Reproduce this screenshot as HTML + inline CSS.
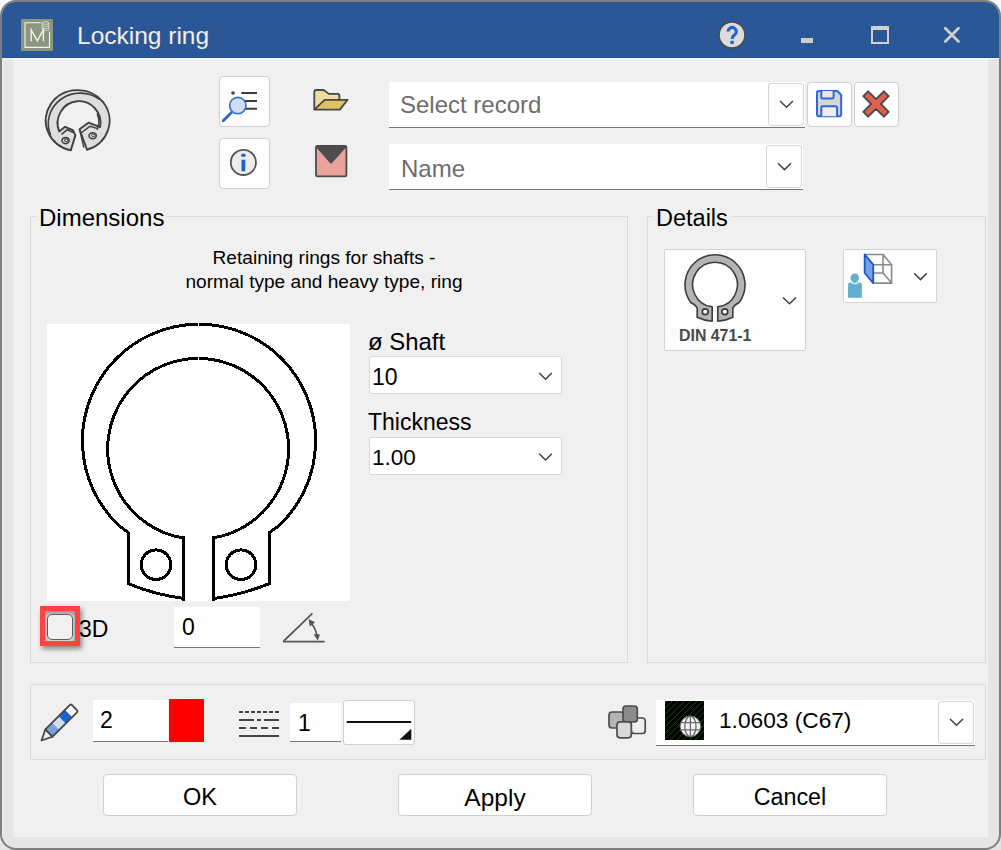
<!DOCTYPE html>
<html><head><meta charset="utf-8">
<style>
*{box-sizing:border-box;margin:0;padding:0}
html,body{width:1001px;height:850px;overflow:hidden;background:linear-gradient(#f8f8f8,#e4e4e4);font-family:"Liberation Sans",sans-serif}
.a{position:absolute}
.t{position:absolute;white-space:nowrap;line-height:1;color:#000}
#win{position:absolute;left:0;top:0;width:1001px;height:850px;border:2px solid #7f7f7f;border-radius:16px;background:#e5e5e5;overflow:hidden}
#title{position:absolute;left:0;top:0;width:997px;height:56px;background:#2b5797;border-bottom:1px solid #224f94}
#content{position:absolute;left:11px;top:56px;width:975px;height:779px;background:#f0f0f0;border-top:1px solid #fbfbfb}
.btn{position:absolute;background:#fdfdfd;border:1px solid #d0d0d0;border-radius:4px}
.inp{position:absolute;background:#fff;border-bottom:1.3px solid #757575}
.dd{position:absolute;background:#fdfdfd;border:1px solid #d6d6d6;border-radius:3px}
.grp{position:absolute;border:1px solid #dadada}
.chev{position:absolute}
</style></head>
<body>
<div id="win">
 <div id="title"></div>
 <div id="content"></div>
 <div class="a" style="left:0;top:56px;width:997px;height:1px;background:#f8f8f8"></div>
 <div class="a" style="left:0;top:56px;width:1px;height:780px;background:#efefef"></div>
</div>

<!-- title bar contents (absolute page coords) -->
<svg class="a" style="left:21px;top:19px" width="32" height="32" viewBox="0 0 32 32">
 <rect x="0" y="0" width="32" height="32" fill="#8a977f"/>
 <path d="M20 3.8H4V28.4H28.5V12.6" fill="none" stroke="#f4f4ee" stroke-width="1.1"/>
 <path d="M10.2 22.2V10.8L16.3 21.8L22.4 10.8V22.2" fill="none" stroke="#f4f4ee" stroke-width="1.4"/>
 <g fill="none" stroke="#e6e8de" stroke-width="0.8">
  <ellipse cx="24.5" cy="4" rx="3.3" ry="1.3"/>
  <path d="M21.2 4V10.4C21.2 11.6 27.8 11.6 27.8 10.4V4M21.2 6.3C21.2 7.5 27.8 7.5 27.8 6.3M21.2 8.5C21.2 9.7 27.8 9.7 27.8 8.5"/>
 </g>
</svg>
<div class="t" style="left:77px;top:24px;font-size:24.5px;color:#f2efe6">Locking ring</div>

<!-- title buttons -->
<svg class="a" style="left:717px;top:20px" width="30" height="30" viewBox="0 0 30 30">
 <circle cx="15" cy="15" r="13" fill="#dcdcdc" stroke="#4a4a4a" stroke-width="1.6"/>
 <path d="M11.1 11.6A4.1 4.1 0 1 1 17.3 15.1Q15.2 16.4 15.2 19" fill="none" stroke="#1f63d3" stroke-width="3.1"/><circle cx="15.1" cy="22.3" r="1.9" fill="#1f63d3"/>
</svg>
<div class="a" style="left:801px;top:38px;width:12px;height:4.5px;background:#cfcdcb"></div>
<div class="a" style="left:871px;top:26px;width:18px;height:18px;border:2px solid #d2d0ce;border-top-width:4px"></div>
<svg class="a" style="left:942px;top:25px" width="20" height="20" viewBox="0 0 20 20">
 <path d="M3.3 3.3L16.5 16.5M16.5 3.3L3.3 16.5" stroke="#d2d0ce" stroke-width="2.7" stroke-linecap="round"/>
</svg>

<!-- group boxes -->
<div class="grp" style="left:30px;top:216px;width:598px;height:447px"></div>
<div class="a" style="left:37px;top:210px;width:130px;height:12px;background:#f0f0f0"></div>
<div class="t" style="left:39px;top:205.8px;font-size:24px">Dimensions</div>
<div class="grp" style="left:647px;top:216px;width:339px;height:447px"></div>
<div class="a" style="left:653px;top:210px;width:78px;height:12px;background:#f0f0f0"></div>
<div class="t" style="left:656px;top:207px;font-size:23.5px">Details</div>
<div class="grp" style="left:30px;top:684px;width:956px;height:76px"></div>

<!-- top row -->
<div class="btn" style="left:219px;top:76px;width:51px;height:51px"></div>
<div class="btn" style="left:219px;top:138px;width:51px;height:51px"></div>

<div class="inp" style="left:389px;top:82px;width:416px;height:46px"></div>
<div class="t" style="left:400px;top:93px;font-size:24px;color:#6d6d6d">Select record</div>
<div class="dd" style="left:768px;top:83px;width:36px;height:43px"></div>
<div class="btn" style="left:807px;top:82px;width:45px;height:45px"></div>
<div class="btn" style="left:854px;top:82px;width:45px;height:45px"></div>

<div class="inp" style="left:389px;top:144px;width:414px;height:46px"></div>
<div class="t" style="left:401px;top:157px;font-size:24px;color:#6d6d6d">Name</div>
<div class="dd" style="left:766px;top:145px;width:36px;height:43px"></div>

<!-- dimensions contents -->
<div class="t" style="left:0;width:648px;text-align:center;top:247.5px;font-size:19.1px">Retaining rings for shafts -</div>
<div class="t" style="left:0;width:648px;text-align:center;top:272px;font-size:19.1px">normal type and heavy type, ring</div>
<div class="a" style="left:47px;top:324px;width:303px;height:277px;background:#fff"></div>

<div class="t" style="left:368px;top:330px;font-size:23.9px">ø Shaft</div>
<div class="dd" style="left:369px;top:356px;width:193px;height:38px;background:#fff;border-color:#d8d8d8;border-radius:2px"></div>
<div class="t" style="left:372px;top:366px;font-size:23px">10</div>
<div class="t" style="left:368px;top:411px;font-size:23px">Thickness</div>
<div class="dd" style="left:369px;top:437px;width:193px;height:38px;background:#fff;border-color:#d8d8d8;border-radius:2px"></div>
<div class="t" style="left:372px;top:446.5px;font-size:22.5px">1.00</div>

<div class="inp" style="left:174px;top:607px;width:86px;height:41px"></div>
<div class="t" style="left:182px;top:615.5px;font-size:23px">0</div>
<div class="t" style="left:79px;top:618px;font-size:23px">3D</div>


<div class="a" style="left:40px;top:606px;width:40px;height:40px;border:5px solid #ff4242;box-shadow:2px 3px 5px rgba(0,0,0,0.45);background:#f0f0f0"></div>
<div class="a" style="left:45px;top:611px;width:30px;height:30px;box-shadow:inset 0 2px 5px 1px #8c8c8c"></div>
<div class="a" style="left:47px;top:614px;width:26px;height:26px;border:1.8px solid #5c5c5c;border-radius:5px;background:#f0f0f0"></div>
<!-- details -->
<div class="btn" style="left:664px;top:249px;width:142px;height:102px;border-radius:2px;border-color:#d4d4d4"></div>
<div class="t" style="left:679px;top:328.3px;font-size:15.9px;font-weight:bold;color:#4a4a4a">DIN 471-1</div>
<div class="btn" style="left:843px;top:249px;width:94px;height:54px;border-radius:2px;border-color:#d4d4d4"></div>

<!-- bottom toolbar -->
<div class="inp" style="left:93px;top:700px;width:75px;height:42px"></div>
<div class="t" style="left:100px;top:708.5px;font-size:23px">2</div>
<div class="a" style="left:169px;top:699px;width:35px;height:43px;background:#ff0000"></div>
<div class="inp" style="left:290px;top:703px;width:51px;height:39px"></div>
<div class="t" style="left:298px;top:712px;font-size:23px">1</div>
<div class="btn" style="left:343px;top:700px;width:72px;height:45px;border-radius:3px;border-color:#d0d0d0"></div>
<div class="inp" style="left:656px;top:700px;width:319px;height:45.5px"></div>
<div class="dd" style="left:938px;top:701px;width:36px;height:43px"></div>
<div class="t" style="left:719px;top:708.5px;font-size:22.7px">1.0603 (C67)</div>

<!-- buttons -->
<div class="btn" style="left:103px;top:774px;width:194px;height:41.5px;border-color:#d0d0d0"></div>
<div class="t" style="left:103px;width:194px;text-align:center;top:785.5px;font-size:23.5px">OK</div>
<div class="btn" style="left:398px;top:774px;width:194px;height:41.5px;border-color:#d0d0d0"></div>
<div class="t" style="left:398px;width:194px;text-align:center;top:785.5px;font-size:24.5px">Apply</div>
<div class="btn" style="left:693px;top:774px;width:194px;height:41.5px;border-color:#d0d0d0"></div>
<div class="t" style="left:693px;width:194px;text-align:center;top:786px;font-size:23.3px">Cancel</div>

<svg class="a" style="left:0;top:0" width="1001" height="850" viewBox="0 0 1001 850">
 <!-- top-left ring icon -->
 <g stroke="#404040" stroke-width="1.9" stroke-linejoin="round" fill="none">
  <path d="M70.73 150.38A31.95 30.5 0 1 1 86.99 149.77L79.5 129.2L88.5 122.7L100.17 127.02A21.45 22 0 1 0 59.16 131.44L65.1 126.8L72.9 130.1L75.4 135.4Z" fill="#dedede" fill-rule="evenodd"/>
  <path d="M50.58 135.03A31.95 30.5 0 0 1 99.87 99.57" stroke-width="1.6"/>
  <path d="M97.19 129.84A21.45 22 0 0 0 97.19 113.36" stroke-width="1.5"/>
  <path d="M61.5 134.3L67.3 129.7L73.5 132.5" stroke-width="1.5"/>
  <path d="M81.6 132.5L90.2 126.2L97.5 128.6" stroke-width="1.5"/>
  <path d="M79.5 129.2L83.8 147.6" stroke-width="1.4"/>
  <ellipse cx="65.6" cy="140.6" rx="3.6" ry="3" stroke-width="1.6"/>
  <ellipse cx="66.2" cy="140.2" rx="1.8" ry="1.3" stroke-width="1"/>
  <ellipse cx="92.7" cy="135.7" rx="3.6" ry="3" stroke-width="1.6"/>
  <ellipse cx="93.3" cy="135.3" rx="1.8" ry="1.3" stroke-width="1"/>
 </g>

 <!-- search list icon -->
 <circle cx="233" cy="93" r="1.8" fill="#444"/>
 <path d="M241.3 93H257M241.3 101H257M241.3 108.8H257" stroke="#3c3c3c" stroke-width="2"/>
 <path d="M223.2 120.8L231.2 112.8" stroke="#2b66cc" stroke-width="2.8" stroke-linecap="round"/>
 <circle cx="237.8" cy="105.6" r="8.2" fill="#cfdcf1" stroke="#2f6fd6" stroke-width="1.6"/>

 <!-- info icon -->
 <circle cx="243.4" cy="162.4" r="12.6" fill="#ececec" stroke="#555" stroke-width="1.8"/>
 <ellipse cx="243.4" cy="155.3" rx="2.3" ry="1.7" fill="#1e5fd0"/>
 <rect x="241.5" y="159.7" width="3.8" height="11.5" fill="#1e5fd0"/>

 <!-- folder -->
 <g stroke="#44464a" stroke-width="1.8" stroke-linejoin="round">
  <path d="M314.3 109.6V92Q314.3 90 316.3 90H323.6L328.9 93.9H337.6Q339.4 93.9 339.4 95.7V99.8" fill="#f0dc9e"/>
  <path d="M314.3 109.6L324.7 99.8H347.6L339.9 109.6Z" fill="#e0c262"/>
 </g>

 <!-- envelope -->
 <rect x="316" y="146" width="30.4" height="30.4" rx="1.6" fill="#e9a39b" stroke="#4a4a4a" stroke-width="1.8"/>
 <path d="M316.5 146.5L331 163L345.9 146.5Z" fill="#4d4d4d" stroke="#4d4d4d" stroke-width="1.5" stroke-linejoin="round"/>

 <!-- chevrons -->
 <g fill="none" stroke="#404040" stroke-width="1.5">
  <path d="M780 101L786.5 107.3L793 101"/>
  <path d="M778 163.3L784.5 169.6L791 163.3"/>
  <path d="M539.2 373L545.5 379.2L551.8 373"/>
  <path d="M539.2 453.8L545.5 460L551.8 453.8"/>
  <path d="M783 297.5L789.5 303.8L796 297.5"/>
  <path d="M914.2 273.3L920.5 279.6L926.8 273.3"/>
  <path d="M950 719L956.5 725.3L963 719"/>
 </g>

 <!-- save icon -->
 <g stroke="#2a6ad8" stroke-width="2" stroke-linejoin="round">
  <path d="M819 91H837.3L841.2 95V114.3Q841.2 116.3 839.2 116.3H819Q817 116.3 817 114.3V93Q817 91 819 91Z" fill="#d6d6d6"/>
  <path d="M821.3 91V97.2Q821.3 98.6 822.7 98.6H832.2Q833.6 98.6 833.6 97.2V91" fill="#e8e8e8"/>
  <path d="M821.3 116.3V107.8Q821.3 106.3 822.8 106.3H835.6Q837.1 106.3 837.1 107.8V116.3" fill="#efefef"/>
 </g>

 <!-- delete X -->
 <path d="M876.00 99.19L883.85 91.34L888.66 96.15L880.81 104.00L888.66 111.85L883.85 116.66L876.00 108.81L868.15 116.66L863.34 111.85L871.19 104.00L863.34 96.15L868.15 91.34Z" fill="#e0604e" stroke="#4a4a4a" stroke-width="1.9" stroke-linejoin="round"/>

 <!-- ring drawing -->
 <g fill="none" stroke="#000" stroke-width="3" shape-rendering="crispEdges">
  <path d="M184.6 598.6Q156 595 128 583.6V532.5L119.4 526A116.6 116.6 0 1 1 278.6 526L269.4 532.5V583.6Q241 595 213.2 598.6"/>
  <path d="M183.7 601V537.8L174.7 536.2A90.45 90.45 0 1 1 221.6 536.2L213.2 537.8V601"/>
  <circle cx="156" cy="564.7" r="14.8" stroke-width="3"/>
  <circle cx="241" cy="564.7" r="14.8" stroke-width="3"/>
 </g>
 <rect x="198" y="322" width="1" height="8" fill="#fff"/>
 <rect x="198" y="353" width="1" height="9" fill="#fff"/>

 <!-- angle icon -->
 <g stroke="#555" stroke-width="1.8" fill="none">
  <path d="M283 641.7H324.6M283.6 641.2L312.4 613.3"/>
  <path d="M310.8 622.8Q316.3 629 317 637" stroke-width="1.7"/>
 </g>
 <path d="M308.6 619L315 622.2L309.8 626.5Z" fill="#555"/>
 <path d="M317.8 640.5L313.6 634.3L320 634.6Z" fill="#555"/>

 <!-- details ring icon -->
 <path d="M712.2 321.2Q704 320.6 697.2 317.2V308.5Q696.5 305.5 690.8 302.5A30 30 0 1 1 739.2 302.5Q733.5 305.5 732.8 308.5V317.2Q726 320.6 717.8 321.2V306.9A22.4 22.4 0 1 0 712.2 306.9Z" fill="#b4b4b4" stroke="#3c3c3c" stroke-width="1.6" stroke-linejoin="round"/>
 <circle cx="705.2" cy="311.8" r="2.9" fill="#fff" stroke="#3c3c3c" stroke-width="1.7"/>
 <circle cx="724.8" cy="311.8" r="2.9" fill="#fff" stroke="#3c3c3c" stroke-width="1.7"/>

 <!-- person + cube -->
 <circle cx="854.8" cy="277.9" r="4.3" fill="#64afd0"/>
 <path d="M848 297.8V285.5Q848 282.3 851.2 282.3H858.6Q861.9 282.3 861.9 285.5V297.8Z" fill="#64afd0"/>
 <path d="M851 282.6Q854.8 285.2 858.8 282.6" stroke="#fff" stroke-width="1" fill="none"/>
 <g fill="none" stroke="#8a8a8a" stroke-width="1.6">
  <path d="M864.7 254.5H883L891.6 264.7V283.1H873.2M873.2 264.7H891.6M883 254.5V273M864.7 273H883L891.6 283.1"/>
 </g>
 <path d="M864.7 254.5L873.2 264.7V283.1L864.7 273Z" fill="#7ba2e0" stroke="#1e5ad0" stroke-width="1.9" stroke-linejoin="round"/>

 <!-- pencil -->
 <g transform="translate(41.5 740.5) rotate(-45)" stroke-linejoin="round">
  <path d="M0 0L10.6 -5.1V5.1Z" fill="#f0f0f0" stroke="#474747" stroke-width="1.8"/>
  <rect x="10.6" y="-5.1" width="9.7" height="10.2" fill="#77a0dc"/>
  <rect x="20.3" y="-5.1" width="9" height="10.2" fill="#d0def2"/>
  <rect x="29.3" y="-5.1" width="9.1" height="10.2" fill="#1f5fcf"/>
  <rect x="38.4" y="-5.1" width="8.2" height="10.2" fill="#fbfbfb"/>
  <path d="M10.6 -5.1H45Q46.6 -5.1 46.6 -3.5V3.5Q46.6 5.1 45 5.1H10.6Z" fill="none" stroke="#474747" stroke-width="1.8"/>
 </g>

 <!-- line types -->
 <g stroke="#444" stroke-width="2">
  <path d="M239 712H243M245 712H249M251 712H255M257 712H261M263 712H267M269 712H273M275 712H279"/>
  <path d="M239 720H254M257 720H261M264 720H279"/>
  <path d="M239 728H246M250 728H257M261 728H268M272 728H279"/>
  <path d="M239 736H279"/>
 </g>

 <!-- line style button -->
 <path d="M346.7 721.9H411.2" stroke="#111" stroke-width="2"/>
 <path d="M399.4 739.8H411.3V728.8Z" fill="#111"/>

 <!-- layers icon -->
 <g stroke="#4d4d4d" stroke-width="1.7" stroke-linejoin="round">
  <rect x="609" y="712" width="14.5" height="16" rx="3" fill="#b4b4b4"/>
  <rect x="631.2" y="718" width="14" height="15.5" rx="3" fill="#efefef"/>
  <rect x="623" y="706" width="14.3" height="16" rx="3" fill="#8c8c8c"/>
  <rect x="617" y="721.8" width="14.3" height="16" rx="3" fill="#d9d9d9"/>
 </g>

 <!-- material swatch -->
 <defs><clipPath id="sw"><rect x="665" y="701" width="39" height="39"/></clipPath></defs>
 <rect x="665" y="701" width="39" height="39" fill="#000"/>
 <g clip-path="url(#sw)" stroke="#0a550a" stroke-width="1">
  <path d="M627 740L666 701M633.2 740L672.2 701M639.4 740L678.4 701M645.6 740L684.6 701M651.8 740L690.8 701M658 740L697 701M664.2 740L703.2 701M670.4 740L709.4 701M676.6 740L715.6 701M682.8 740L721.8 701M689 740L728 701M695.2 740L734.2 701M701.4 740L740.4 701"/>
 </g>
 <circle cx="690.4" cy="726.4" r="10.4" fill="#f2f2f2" stroke="#5a5a5a" stroke-width="1"/>
 <g fill="none" stroke="#6a6a6a" stroke-width="1.3">
  <path d="M680.5 722.6H700.3M680.5 729.8H700.3M690.4 716V736.8"/>
  <ellipse cx="690.4" cy="726.4" rx="5.6" ry="10.2"/>
 </g>
</svg>

</body></html>
